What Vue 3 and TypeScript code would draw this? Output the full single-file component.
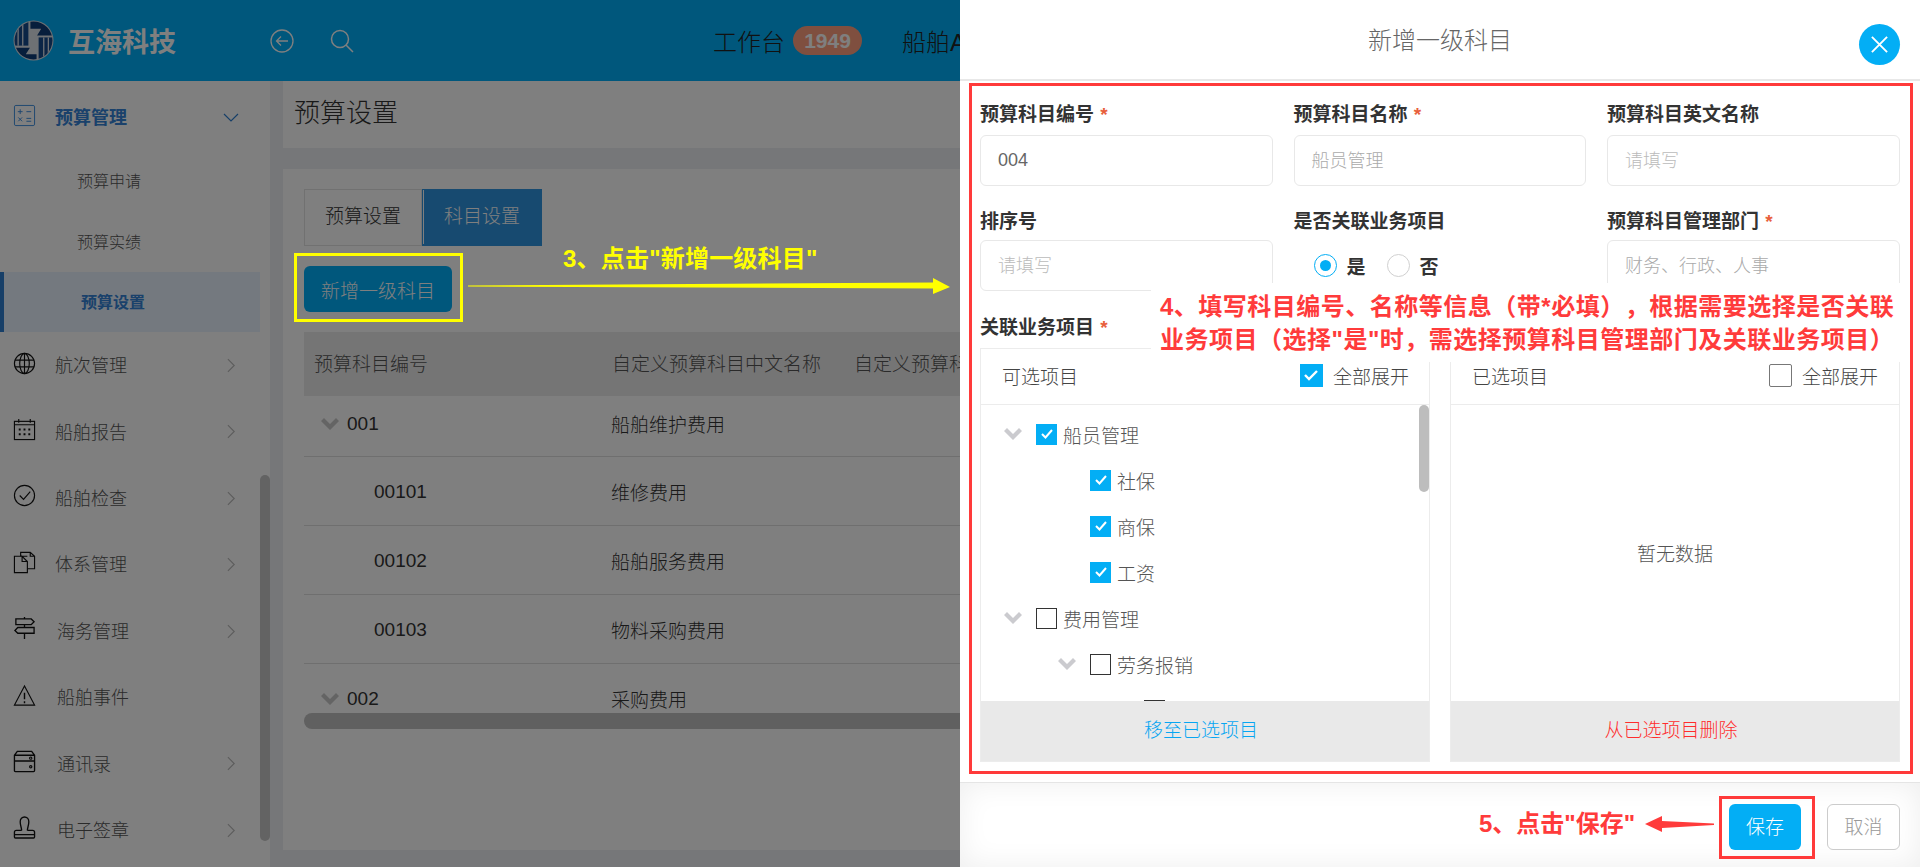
<script setup lang="ts">
interface MenuItem {
  name: string
  icon: string
  arrow: boolean
}

interface TreeRow {
  name: string
  level: number
  expand: boolean
  checked: boolean
}

const menus: MenuItem[] = [
  { name: '航次管理', icon: 'globe', arrow: true },
  { name: '船舶报告', icon: 'calendar', arrow: true },
  { name: '船舶检查', icon: 'check', arrow: true },
  { name: '体系管理', icon: 'docs', arrow: true },
  { name: '海务管理', icon: 'sign', arrow: true },
  { name: '船舶事件', icon: 'warn', arrow: false },
  { name: '通讯录', icon: 'server', arrow: true },
  { name: '电子签章', icon: 'stamp', arrow: true }
]

const subMenus = ['预算申请', '预算实绩', '预算设置']

const rows = [
  { code: '001', name: '船舶维护费用', parent: true },
  { code: '00101', name: '维修费用', parent: false },
  { code: '00102', name: '船舶服务费用', parent: false },
  { code: '00103', name: '物料采购费用', parent: false },
  { code: '002', name: '采购费用', parent: true }
]

const tree: TreeRow[] = [
  { name: '船员管理', level: 0, expand: true, checked: true },
  { name: '社保', level: 1, expand: false, checked: true },
  { name: '商保', level: 1, expand: false, checked: true },
  { name: '工资', level: 1, expand: false, checked: true },
  { name: '费用管理', level: 0, expand: true, checked: false },
  { name: '劳务报销', level: 1, expand: true, checked: false },
  { name: '差旅补贴费', level: 2, expand: false, checked: false }
]
</script>

<template>
  <div class="screen">
    <div class="page">
      <header class="topbar">
        <svg class="logo" viewBox="0 0 40 40">
          <defs>
            <clipPath id="logo-clip"><circle cx="20" cy="20" r="18.500" /></clipPath>
          </defs>
          <circle cx="20" cy="20" r="19.500" fill="#dce2e8" />
          <g clip-path="url(#logo-clip)">
            <rect x="0" y="0" width="15" height="25" fill="#164a8c" />
            <path d="M5 0V25M9.500 0V25" stroke="#dce2e8" stroke-width="1.300" />
            <path d="M17 0H40V15H23.500L27.500 8.500H17Z" fill="#0f3c78" />
            <path d="M0 27H16.500L12.500 33.500H23V40H0Z" fill="#0f3c78" />
            <rect x="25" y="17" width="15" height="23" fill="#164a8c" />
            <path d="M30 17V40M34.500 17V40" stroke="#dce2e8" stroke-width="1.300" />
          </g>
        </svg>
        <span class="brand">互海科技</span>
        <svg class="tool first" viewBox="0 0 24 24" fill="none" stroke="#fff" stroke-width="1.300">
          <circle cx="12" cy="12" r="11" />
          <path d="M18 12H6.500M11 7.500 6.500 12l4.500 4.500" />
        </svg>
        <svg class="tool" viewBox="0 0 24 24" fill="none" stroke="#fff" stroke-width="1.500">
          <circle cx="10" cy="10" r="8.500" />
          <path d="m16 16 7 7" />
        </svg>
        <nav class="topnav">
          <span>工作台</span>
          <span class="badge">1949</span>
          <span class="topnav-next">船舶AIS</span>
        </nav>
      </header>

      <div class="body">
        <aside class="sidebar">
          <div class="menu">
            <div class="menu-item open">
              <svg class="menu-icon" viewBox="0 0 24 24" fill="none" stroke="#3a8ce0" stroke-width="1">
                <rect x="1.500" y="1.500" width="21" height="21" rx="1.500" />
                <path d="M5 8h5M7.500 5.500v5M14 8h5M5.500 14l4 4M9.500 14l-4 4M14 15h5M14 18h5" />
              </svg>
              <span class="menu-name">预算管理</span>
              <svg class="chev down" viewBox="0 0 16 10" fill="none" stroke="#2e7fd0" stroke-width="1.200">
                <path d="m1 1 7 7 7-7" />
              </svg>
            </div>
            <div
              v-for="(sub, i) in subMenus"
              :key="sub"
              :class="['sub-item', { active: i === 2 }]"
            >
              {{ sub }}
            </div>
            <div v-for="(m, i) in menus" :key="m.name" :class="['menu-item', { wide: i >= 4 }]">
              <svg class="menu-icon" viewBox="0 0 24 24" fill="none" stroke="#111" stroke-width="1.200">
                <template v-if="m.icon === 'globe'">
                  <circle cx="12" cy="12" r="10.500" />
                  <ellipse cx="12" cy="12" rx="5" ry="10.500" />
                  <path d="M12 1.500v21M2 8.500h20M2 15.500h20" />
                </template>
                <template v-else-if="m.icon === 'calendar'">
                  <rect x="1.500" y="3.500" width="21" height="19" />
                  <path d="M6 1v4M18 1v4M1.500 7h21" />
                  <path d="M6 12h2M11 12h2M16 12h2M6 17h2M11 17h2M16 17h2" stroke-width="2" />
                </template>
                <template v-else-if="m.icon === 'check'">
                  <circle cx="12" cy="12" r="10.500" />
                  <path d="m7 12 4 4 7-8" />
                </template>
                <template v-else-if="m.icon === 'docs'">
                  <path d="M15 5.500H1.500v17H15V11L9.500 5.500V11H15" />
                  <path d="M8 5.500V1.500h10l4.500 4v13H15M18 1.500v4h4.500" />
                </template>
                <template v-else-if="m.icon === 'sign'">
                  <path d="M3 2h16l3 3-3 3H3ZM5 11h17v6H5l-3-3ZM12 0v2M12 8v3M12 17v6" stroke-width="1.400" />
                </template>
                <template v-else-if="m.icon === 'warn'">
                  <path d="M12 2 1.500 22h21Z" />
                  <path d="M12 9v7M12 18v2" stroke-width="1.500" />
                </template>
                <template v-else-if="m.icon === 'server'">
                  <path d="M1.500 11.500V5.500L4.500 1.500h15l3 4v6ZM1.500 5.500h21M1.500 11.500h21v10q0 1-1 1h-19q-1 0-1-1Z" stroke-width="1.400" />
                  <circle cx="18.500" cy="8.500" r="1.200" />
                  <circle cx="18.500" cy="17.500" r="1.200" />
                </template>
                <template v-else>
                  <path d="M9 15c0-3-1.500-5-1.500-9 0-3 2-5 4.500-5s4.500 2 4.500 5c0 4-1.500 6-1.500 9" stroke-width="1.400" />
                  <path d="M9 15H3.500q-2 0-2 2v5q0 1 1 1h19q1 0 1-1v-5q0-2-2-2H15M1.500 19.500h21" stroke-width="1.400" />
                </template>
              </svg>
              <span class="menu-name">{{ m.name }}</span>
              <svg v-if="m.arrow" class="chev" viewBox="0 0 10 16" fill="none" stroke="#bbb" stroke-width="1.300">
                <path d="m1 1 7 7-7 7" />
              </svg>
            </div>
          </div>
          <div class="side-track"><div class="side-thumb"></div></div>
        </aside>

        <main class="content">
          <div class="title-bar">预算设置</div>
          <section class="card">
            <div class="tabs">
              <span class="tab">预算设置</span>
              <span class="tab current">科目设置</span>
            </div>
            <button class="add-btn">新增一级科目</button>
            <div class="table">
              <div class="thead">
                <span class="col-code">预算科目编号</span>
                <span class="col-name">自定义预算科目中文名称</span>
                <span>自定义预算科目英文名称</span>
              </div>
              <div v-for="r in rows" :key="r.code" class="tr">
                <span :class="['col-code', { child: !r.parent }]">
                  <svg v-if="r.parent" class="fold" viewBox="0 0 18 12" fill="#c8c8c8">
                    <path d="M0 3 3 0l6 6 6-6 3 3-9 9Z" />
                  </svg>
                  {{ r.code }}
                </span>
                <span class="col-name">{{ r.name }}</span>
              </div>
            </div>
            <div class="h-scroll"></div>
          </section>
        </main>
      </div>
      <div class="mask"></div>
    </div>

    <aside class="drawer">
      <div class="drawer-head">
        <span>新增一级科目</span>
        <button class="close">
          <svg viewBox="0 0 20 20" fill="none" stroke="#fff" stroke-width="2">
            <path d="m2 2 16 16M18 2 2 18" />
          </svg>
        </button>
      </div>

      <div class="drawer-body">
        <div class="form-grid">
          <div class="field">
            <label>预算科目编号 <i>*</i></label>
            <div class="input value">004</div>
          </div>
          <div class="field">
            <label>预算科目名称 <i>*</i></label>
            <div class="input soft">船员管理</div>
          </div>
          <div class="field">
            <label>预算科目英文名称</label>
            <div class="input hint">请填写</div>
          </div>
          <div class="field">
            <label>排序号</label>
            <div class="input hint">请填写</div>
          </div>
          <div class="field">
            <label>是否关联业务项目</label>
            <div class="radios">
              <span class="radio on"></span><b>是</b>
              <span class="radio"></span><b>否</b>
            </div>
          </div>
          <div class="field">
            <label>预算科目管理部门 <i>*</i></label>
            <div class="input soft">财务、行政、人事</div>
          </div>
        </div>

        <label class="link-label">关联业务项目 <i>*</i></label>
        <div class="transfer">
          <div class="panel">
            <div class="panel-head">
              <span>可选项目</span>
              <span class="expand-all">
                <span class="box on">
                  <svg viewBox="0 0 14 12" fill="none" stroke="#fff" stroke-width="2.400"><path d="m1 6 4 4 8-8" /></svg>
                </span>
                全部展开
              </span>
            </div>
            <div class="panel-main tree">
              <div
                v-for="t in tree"
                :key="t.name"
                :class="['tree-row', 'level-' + t.level]"
              >
                <svg v-if="t.expand" class="fold" viewBox="0 0 18 12" fill="#cbcbcf">
                  <path d="M0 3 3 0l6 6 6-6 3 3-9 9Z" />
                </svg>
                <span v-else class="fold"></span>
                <span :class="['box', { on: t.checked }]">
                  <svg v-if="t.checked" viewBox="0 0 14 12" fill="none" stroke="#fff" stroke-width="2"><path d="m2 6 3.500 3.500L12 2" /></svg>
                </span>
                <span class="tree-name">{{ t.name }}</span>
              </div>
              <div class="tree-thumb"></div>
            </div>
            <div class="panel-foot move">移至已选项目</div>
          </div>
          <div class="panel">
            <div class="panel-head">
              <span>已选项目</span>
              <span class="expand-all">
                <span class="box"></span>
                全部展开
              </span>
            </div>
            <div class="panel-main empty">暂无数据</div>
            <div class="panel-foot remove">从已选项目删除</div>
          </div>
        </div>
      </div>

      <div class="drawer-foot">
        <button class="btn primary">保存</button>
        <button class="btn">取消</button>
      </div>
    </aside>

    <!-- 教程截图上的标注 -->
    <div class="mark-box yellow"></div>
    <div class="note note-3">3、点击"新增一级科目"</div>
    <svg class="mark-arrow" viewBox="0 0 1920 867">
      <polygon points="468,285.500 933,282.500 933,278 950,287 933,294 933,288.500 468,286.500" fill="#ffff00" />
      <polygon points="1645,824 1662,816 1662,821 1714,823.500 1714,825 1662,828 1662,832" fill="#ff3b3b" />
    </svg>
    <div class="mark-red-form"></div>
    <div class="note-4">
      <p>4、填写科目编号、名称等信息（带*必填），根据需要选择是否关联</p>
      <p>业务项目（选择"是"时，需选择预算科目管理部门及关联业务项目）</p>
    </div>
    <div class="mark-red-save"></div>
    <div class="note note-5">5、点击"保存"</div>
  </div>
</template>

<style>
html,
body {
  margin: 0;
  padding: 0;
  overflow: hidden;
}
</style>

<style scoped>
* {
  box-sizing: border-box;
}

.screen {
  position: relative;
  width: 1920px;
  height: 867px;
  overflow: hidden;
  font-family: "Liberation Sans", "Noto Sans CJK SC", sans-serif;
  font-weight: 300;
  font-size: 19px;
  color: #333;
  background: #fff;
  text-spacing-trim: space-all;
}

.page {
  position: relative;
  width: 1920px;
  height: 867px;
  display: flex;
  flex-direction: column;
}

.mask {
  position: absolute;
  inset: 0;
  background: rgba(0, 0, 0, 0.5);
}

.topbar {
  height: 81px;
  flex: none;
  background: #00aef8;
  display: flex;
  align-items: center;
  padding-left: 13px;
}

.logo {
  width: 41px;
  height: 41px;
}

.brand {
  margin-left: 14px;
  width: 108px;
  font-size: 27px;
  font-weight: 700;
  color: #fff;
  white-space: nowrap;
}

.tool {
  width: 24px;
  height: 24px;
  margin-left: 36px;
}

.tool.first {
  margin-left: 94px;
}

.topnav {
  display: flex;
  align-items: center;
  margin-left: 359px;
  font-size: 24px;
  color: #222;
  white-space: nowrap;
}

.badge {
  margin-left: 8px;
  width: 69px;
  height: 29px;
  line-height: 29px;
  border-radius: 15px;
  background: #ff9f7f;
  color: #fff;
  font-size: 21px;
  font-weight: 700;
  text-align: center;
}

.topnav-next {
  margin-left: 40px;
}

.body {
  flex: 1;
  min-height: 0;
  display: flex;
  background: #eceef3;
}

.sidebar {
  width: 270px;
  flex: none;
  display: flex;
  background: #fff;
  overflow: hidden;
}

.menu {
  width: 260px;
  padding-top: 3px;
}

.menu-item {
  height: 66.400px;
  display: flex;
  align-items: center;
  padding-left: 13px;
  position: relative;
  color: #555;
  font-size: 18px;
}

.menu-item.open {
  height: 66px;
  font-weight: 700;
  color: #3583d6;
}

.menu-icon {
  width: 23px;
  height: 23px;
  flex: none;
  margin-top: -4px;
}

.menu-name {
  margin-left: 19px;
  position: relative;
  top: -1px;
}

.menu-item.wide .menu-name {
  margin-left: 21px;
}

.chev {
  position: absolute;
  left: 227px;
  top: 26px;
  width: 9px;
  height: 15px;
}

.chev.down {
  left: 223px;
  top: 29px;
  width: 16px;
  height: 10px;
}

.sub-item {
  height: 61px;
  line-height: 63px;
  padding-left: 77px;
  font-size: 16px;
  color: #555;
}

.sub-item.active {
  height: 60px;
  line-height: 62px;
  padding-left: 77px;
  background: #e8f3ff;
  border-left: 4px solid #2e7fd0;
  color: #3583d6;
  font-weight: 700;
}

.side-track {
  width: 10px;
  padding-top: 394px;
}

.side-thumb {
  height: 366px;
  border-radius: 5px;
  background: #c6c6c6;
}

.content {
  flex: 1;
  min-width: 0;
  padding-left: 13px;
  display: flex;
  flex-direction: column;
}

.title-bar {
  height: 67px;
  flex: none;
  padding: 0 0 0 11px;
  line-height: 64px;
  font-size: 26px;
  color: #333;
  background: #fff;
}

.card {
  margin-top: 21px;
  height: 681px;
  flex: none;
  padding: 20px 0 0 21px;
  background: #fff;
}

.tabs {
  display: flex;
  height: 57px;
}

.tab {
  width: 118px;
  border: 1px solid #e3e3e3;
  text-align: center;
  line-height: 53px;
  font-size: 19px;
}

.tab.current {
  width: 120px;
  background: #2e94e0;
  border: 1px solid #2e94e0;
  box-shadow: inset 1px 0 0 #fff;
  border-bottom: 2px solid #2e94e0;
  color: #fff;
}

.add-btn {
  display: block;
  margin-top: 20px;
  width: 148px;
  height: 46px;
  border: none;
  border-radius: 6px;
  background: #00aef8;
  color: #fff;
  font: inherit;
  font-size: 19px;
  padding: 0;
}

.table {
  margin-top: 20px;
  height: 381px;
  overflow: hidden;
}

.thead {
  height: 64px;
  display: flex;
  align-items: center;
  background: #ebebeb;
  color: #555;
  padding-bottom: 4px;
}

.thead .col-code {
  width: 298px;
  padding-left: 10px;
}

.col-code {
  width: 307px;
  padding-left: 11px;
  flex: none;
}

.col-name {
  width: 253px;
  flex: none;
}

.thead .col-name {
  width: 242px;
  padding-left: 11px;
  margin-left: -1px;
  margin-right: 11px;
  white-space: nowrap;
}

.thead span {
  white-space: nowrap;
}

.tr {
  height: 69px;
  display: flex;
  align-items: center;
  border-bottom: 1px solid #dedede;
  color: #333;
}

.tr:nth-child(2) {
  height: 61px;
}

.tr:nth-child(2) span {
  position: relative;
  top: -3px;
}

.tr .col-code {
  padding-left: 17px;
  display: flex;
  align-items: center;
  padding-top: 1px;
}

.tr .col-code.child {
  padding-left: 70px;
}

.fold {
  width: 18px;
  height: 12px;
  flex: none;
  margin-right: 8px;
}

.h-scroll {
  height: 16px;
  width: 1500px;
  border-radius: 8px;
  background: #c0c0c0;
}

.drawer {
  position: absolute;
  top: 0;
  right: 0;
  width: 960px;
  height: 867px;
  display: flex;
  flex-direction: column;
  background: #fff;
}

.drawer-head {
  height: 81px;
  flex: none;
  border-bottom: 2px solid #e8e8e8;
  position: relative;
  text-align: center;
  line-height: 81px;
  font-size: 24px;
  color: #666;
  padding-right: 0;
}

.close {
  position: absolute;
  top: 24px;
  left: 899px;
  width: 41px;
  height: 41px;
  padding: 0;
  border: none;
  border-radius: 50%;
  background: #03aef5;
  display: flex;
  align-items: center;
  justify-content: center;
}

.close svg {
  width: 19px;
  height: 19px;
}

.drawer-body {
  height: 701px;
  flex: none;
  padding: 20px 20px 0;
}

.form-grid {
  display: grid;
  grid-template-columns: repeat(3, 292.500px);
  column-gap: 21px;
  row-gap: 20px;
}

.field label,
.link-label {
  display: block;
  height: 34px;
  line-height: 28px;
  font-weight: 700;
  color: #333;
  white-space: nowrap;
}

.field:nth-child(n + 4) label {
  line-height: 31px;
}

.field label i,
.link-label i {
  color: #e8603c;
  font-style: normal;
  margin-left: 1px;
}

.input {
  height: 51px;
  border: 1px solid #e8e8e8;
  border-radius: 6px;
  padding-left: 17px;
  line-height: 50px;
  font-size: 18px;
}

.input.value {
  color: #666;
  line-height: 49px;
}

.input.soft {
  color: #aaa;
}

.input.hint {
  color: #bbb;
}

.radios {
  height: 51px;
  display: flex;
  align-items: center;
  padding-left: 20px;
}

.radios b {
  font-weight: 700;
  margin: 0 21px 0 10px;
}

.radio {
  width: 23px;
  height: 23px;
  border: 1px solid #d0d0d0;
  border-radius: 50%;
  position: relative;
}

.radio.on {
  border-color: #03aef5;
}

.radio.on::after {
  content: "";
  position: absolute;
  left: 5px;
  top: 5px;
  width: 11px;
  height: 11px;
  border-radius: 50%;
  background: #03aef5;
}

.link-label {
  margin-top: 22px;
  height: 35px;
  line-height: 30px;
}

.transfer {
  display: flex;
  gap: 20px;
}

.panel {
  width: 450px;
  height: 414px;
  border: 1px solid #ececec;
  display: flex;
  flex-direction: column;
}

.panel-head {
  height: 56px;
  flex: none;
  border-bottom: 1px solid #ececec;
  display: flex;
  align-items: center;
  justify-content: space-between;
  padding: 0 21px 3px;
  color: #444;
}

.expand-all {
  display: flex;
  align-items: center;
  gap: 10px;
}

.box {
  width: 21px;
  height: 21px;
  flex: none;
  border: 1.500px solid #333;
  display: flex;
  align-items: center;
  justify-content: center;
}

.box.on {
  border: none;
  background: #03aef5;
}

.box svg {
  width: 14px;
  height: 12px;
}

.expand-all .box {
  width: 23px;
  height: 23px;
}

.expand-all .box:not(.on) {
  border: 1px solid #777;
  border-radius: 2px;
}

.panel:first-child .expand-all {
  margin-left: 1px;
  transform: translateX(1px);
}

.panel-main {
  flex: 1;
  min-height: 0;
  position: relative;
  overflow: hidden;
}

.tree-row {
  height: 46px;
  display: flex;
  align-items: center;
  color: #555;
}

.tree-row .fold {
  margin-right: 14px;
}

.tree-row.level-0 {
  padding-left: 23px;
}

.tree-row.level-1 {
  padding-left: 77px;
}

.tree-row.level-2 {
  padding-left: 131px;
}

.tree-row:first-child {
  margin-top: 6px;
}

.tree-name {
  margin-left: 6px;
}

.tree-thumb {
  position: absolute;
  right: 0;
  top: 0;
  width: 10px;
  height: 87px;
  border-radius: 5px;
  background: #bdbdbd;
}

.empty {
  display: flex;
  align-items: center;
  justify-content: center;
  color: #555;
  padding-bottom: 2px;
}

.panel-foot {
  height: 60px;
  flex: none;
  background: #e9e9e9;
  text-align: center;
  line-height: 60px;
  padding-right: 8px;
}

.move {
  color: #08a6f2;
}

.remove {
  color: #ff2d2d;
}

.drawer-foot {
  flex: 1;
  min-height: 0;
  border-top: 1px solid #e5e5e5;
  box-shadow: inset 0 0 30px rgba(0, 0, 0, 0.07);
  display: flex;
  justify-content: flex-end;
  align-items: flex-start;
  gap: 26px;
  padding: 21px 20px 0 0;
}

.btn {
  width: 73px;
  height: 46px;
  padding: 0 0 3px;
  border: 1px solid #ccc;
  border-radius: 6px;
  background: #fff;
  color: #999;
  font: inherit;
  font-size: 19px;
}

.btn.primary {
  width: 72px;
  border: none;
  background: #03aef5;
  color: #fff;
}

.mark-box {
  position: absolute;
}

.yellow {
  left: 294px;
  top: 253px;
  width: 169px;
  height: 69px;
  border: 3px solid #ffff00;
}

.note {
  position: absolute;
  font-size: 24px;
  font-weight: 700;
  white-space: nowrap;
  line-height: 32px;
}

.note-3 {
  left: 563px;
  top: 243px;
  color: #ffff00;
  letter-spacing: 0.2px;
}

.note-5 {
  left: 1479px;
  top: 808px;
  color: #ff3b3b;
}

.mark-arrow {
  position: absolute;
  left: 0;
  top: 0;
  width: 1920px;
  height: 867px;
  pointer-events: none;
}

.mark-red-form {
  position: absolute;
  left: 969px;
  top: 83px;
  width: 944px;
  height: 691px;
  border: 3px solid #ff3a3a;
}

.mark-red-save {
  position: absolute;
  left: 1719px;
  top: 796px;
  width: 96px;
  height: 63px;
  border: 3px solid #ff3a3a;
}

.note-4 {
  position: absolute;
  left: 1151px;
  top: 283px;
  width: 755px;
  height: 79px;
  padding: 7px 0 0 9px;
  background: #fff;
  color: #ff3b3b;
  font-size: 24px;
  font-weight: 700;
  line-height: 33px;
  letter-spacing: 0.5px;
  white-space: nowrap;
}

.note-4 p {
  margin: 0;
}
</style>
